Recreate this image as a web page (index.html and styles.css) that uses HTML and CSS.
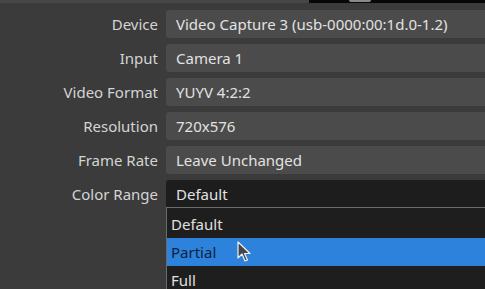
FILE: index.html
```html
<!DOCTYPE html>
<html>
	<head>
		<meta charset="UTF-8">
		<title>Properties</title>
		<link rel="stylesheet" href="styles.css">
	</head>
	<body>
		<div class="top">
			<div class="top-left"></div>
			<div class="preview"><span class="blip"></span></div>
		</div>
		<div class="form">
			<label>Device</label>
			<div class="field">Video Capture 3 (usb-0000:00:1d.0-1.2)</div>
			<label>Input</label>
			<div class="field">Camera 1</div>
			<label>Video Format</label>
			<div class="field">YUYV 4:2:2</div>
			<label>Resolution</label>
			<div class="field">720x576</div>
			<label>Frame Rate</label>
			<div class="field">Leave Unchanged</div>
			<label>Color Range</label>
			<div class="field open">Default</div>
			<label></label>
			<div class="field blank"></div>
			<label></label>
			<div class="field blank"></div>
			<label>Frames to skip</label>
			<div class="field blank"></div>
		</div>

		<ul class="popup">
			<li>Default</li>
			<li class="sel">Partial</li>
			<li>Full</li>
		</ul>

		<!-- mouse pointer -->
		<svg class="cursor" width="14" height="22" viewBox="0 0 14 22">
			<path d="M1 1 L1 17 L5 13 L8 20 L10.5 19 L7.5 12.5 L13 12.5 Z" fill="#454545" stroke="#f0f0f0" stroke-width="1.2" stroke-linejoin="round"/>
		</svg>
	</body>
</html>
```

FILE: styles.css
```css
*{
	padding:0;
	margin:0;
	box-sizing:border-box;
}
body{
	background:#3b3b3b;
	font-family:"Noto Sans","Open Sans",sans-serif;
	font-size:15px;
	color:#dedede;
	width:485px;
	height:289px;
	overflow:hidden;
	position:relative;
}
.top{
	display:flex;
	height:3px;
}
.top-left{
	width:309px;
	background:#474747;
}
.preview{
	flex:1;
	background:#0a0606;
	position:relative;
}
.blip{
	position:absolute;
	left:40px;
	top:0;
	width:22px;
	height:2px;
	border-radius:0 0 4px 4px;
	background:#8a8a8a;
}
.form{
	display:grid;
	grid-template-columns:158px 1fr;
	column-gap:8px;
	row-gap:6px;
	padding-top:7px;
}
label{
	height:28px;
	line-height:28px;
	text-align:right;
	color:#d4d4d4;
}
.field{
	height:28px;
	line-height:28px;
	background:#4b4b4b;
	border-radius:3px 0 0 3px;
	padding-left:10px;
	color:#e2e2e2;
	white-space:nowrap;
	overflow:hidden;
}
.field.open{
	background:#1d1d1d;
}
ul{
	list-style:none;
}
.popup{
	position:absolute;
	left:166px;
	top:207px;
	right:0;
	height:100px;
	background:#1e1e1e;
	border:1px solid #6b6b6b;
	border-right:none;
	padding-top:2px;
}
.popup li{
	height:28px;
	line-height:28px;
	padding-left:4px;
	color:#e0e0e0;
}
.popup li.sel{
	background:#2d82db;
	color:#0d2240;
}
.cursor{
	position:absolute;
	left:237px;
	top:241px;
}
```
